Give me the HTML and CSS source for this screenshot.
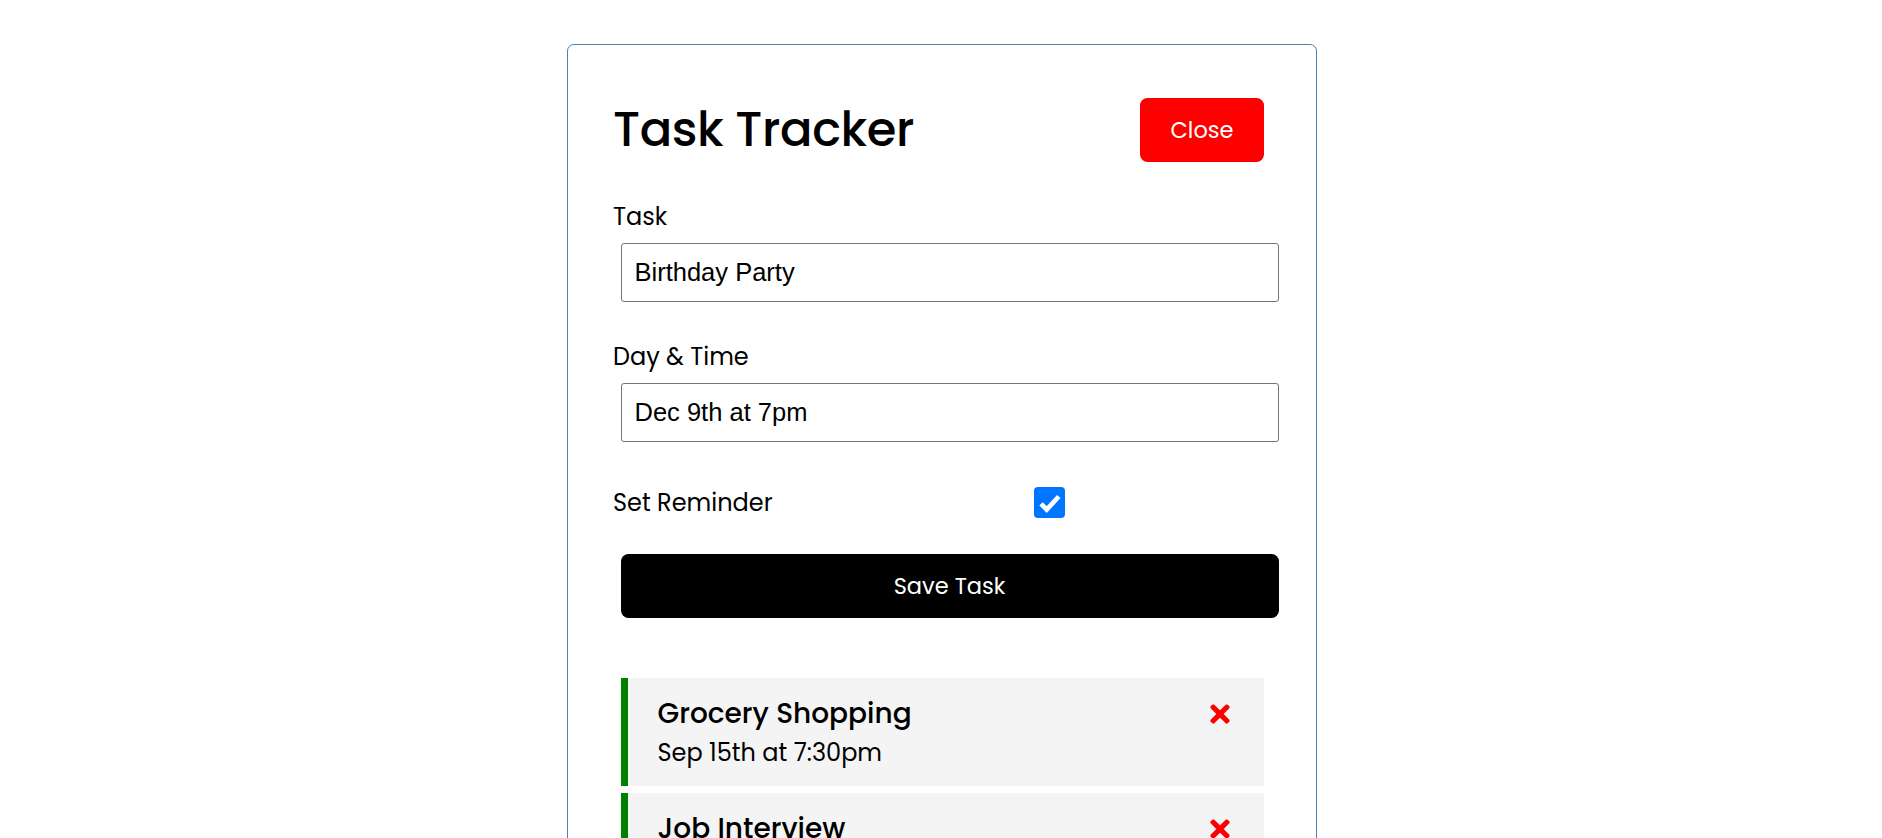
FILE: index.html
```html
<!DOCTYPE html>
<html lang="en">
<head>
    <meta charset="UTF-8">
    <meta name="viewport" content="width=device-width, initial-scale=1.0">
    <title>Task Tracker</title>
    <link rel="stylesheet" href="styles.css">
</head>
<body>

    <div class="container">
        <header class="header">
            <h1>Task Tracker</h1>
            <button class="btn btn-close">Close</button>
        </header>

        <form class="add-form">
            <div class="form-control">
                <label>Task</label>
                <input type="text" value="Birthday Party">
            </div>
            <div class="form-control">
                <label>Day &amp; Time</label>
                <input type="text" value="Dec 9th at 7pm">
            </div>
            <div class="form-control form-control-check">
                <label>Set Reminder</label>
                <span class="check-wrap">
                    <span class="check">
                        <svg viewBox="0 0 30 30" width="30" height="30">
                            <path d="M6.8 16.3 L12.3 21.8 L24 9.2" fill="none" stroke="#fff" stroke-width="4.6"/>
                        </svg>
                    </span>
                </span>
            </div>
            <button type="button" class="btn btn-block">Save Task</button>
        </form>

        <div class="task reminder">
            <h3>Grocery Shopping
                <svg class="del" viewBox="0 0 352 512" width="28" height="28">
                    <path d="M242.72 256l100.07-100.07c12.28-12.28 12.28-32.19 0-44.48l-22.24-22.24c-12.28-12.28-32.19-12.28-44.48 0L176 189.28 75.930 89.21c-12.28-12.28-32.19-12.28-44.48 0L9.21 111.45c-12.28 12.28-12.28 32.19 0 44.48L109.28 256 9.21 356.07c-12.28 12.28-12.28 32.19 0 44.48l22.24 22.24c12.28 12.28 32.2 12.28 44.48 0L176 322.72l100.07 100.07c12.28 12.28 32.2 12.28 44.48 0l22.24-22.24c12.28-12.28 12.28-32.19 0-44.48L242.72 256z"/>
                </svg>
            </h3>
            <p>Sep 15th at 7:30pm</p>
        </div>

        <div class="task reminder">
            <h3>Job Interview
                <svg class="del" viewBox="0 0 352 512" width="28" height="28">
                    <path d="M242.72 256l100.07-100.07c12.28-12.28 12.28-32.19 0-44.48l-22.24-22.24c-12.28-12.28-32.19-12.28-44.48 0L176 189.28 75.93 89.21c-12.28-12.28-32.19-12.28-44.48 0L9.21 111.45c-12.28 12.28-12.28 32.19 0 44.48L109.28 256 9.21 356.07c-12.28 12.28-12.28 32.19 0 44.48l22.24 22.24c12.28 12.28 32.2 12.28 44.48 0L176 322.72l100.07 100.07c12.28 12.28 32.2 12.28 44.48 0l22.24-22.24c12.28-12.28 12.28-32.19 0-44.48L242.72 256z"/>
                </svg>
            </h3>
            <p>Sep 18th at 10:00am</p>
        </div>
    </div>

</body>
</html>
```

FILE: styles.css
```css
* {
    box-sizing: border-box;
    margin: 0;
    padding: 0;
}

body {
    font-family: 'Poppins', Inter, sans-serif;
    font-size: 24px;
    line-height: 36px;
    color: #000;
    background: #fff;
    padding-left: 2px;
}

.container {
    max-width: 750px;
    margin: 44px auto;
    min-height: 450px;
    border: 1px solid steelblue;
    border-radius: 7px;
    padding: 45px;
}

.header {
    display: flex;
    justify-content: space-between;
    align-items: center;
    margin-bottom: 30px;
}

.header h1 {
    font-size: 48px;
    font-weight: 500;
    letter-spacing: -0.4px;
    line-height: 72px;
}

.btn {
    display: inline-block;
    background: #000;
    color: #fff;
    border: none;
    padding: 15px 30px;
    margin: 7.5px;
    border-radius: 7.5px;
    cursor: pointer;
    font-size: 22.5px;
    line-height: 34px;
    font-family: inherit;
}

.btn:focus {
    outline: none;
}

.btn-close {
    background: red;
}

.btn-block {
    display: block;
    width: 100%;
    margin-top: 31px;
}

.add-form {
    margin-bottom: 60px;
}

.form-control {
    margin: 30px 0;
}

.form-control label {
    display: block;
}

.form-control input {
    width: 100%;
    height: 59px;
    margin: 7.5px;
    padding: 4.5px 13px;
    font-family: 'Liberation Sans', Arial, sans-serif;
    font-size: 25.5px;
    border: 1px solid #767676;
    border-radius: 3px;
}

.form-control-check {
    display: flex;
    align-items: center;
    justify-content: space-between;
    margin-top: 33.5px;
}

.form-control-check label {
    flex: 1;
}

.check-wrap {
    flex: 2;
    display: flex;
    justify-content: center;
    margin: 4.5px 3px 4.5px 0;
}

.check {
    display: block;
    width: 31px;
    height: 31px;
    background: #0075ff;
    border-radius: 4px;
}

.check svg {
    display: block;
    width: 31px;
    height: 31px;
}

.task {
    background: #f4f4f4;
    margin: 7.5px;
    padding: 15px 30px;
    cursor: pointer;
}

.task.reminder {
    border-left: 7.5px solid green;
}

.task h3 {
    display: flex;
    align-items: center;
    justify-content: space-between;
    font-size: 28px;
    font-weight: 500;
    line-height: 42px;
}

.task .del {
    fill: red;
    cursor: pointer;
}
```
